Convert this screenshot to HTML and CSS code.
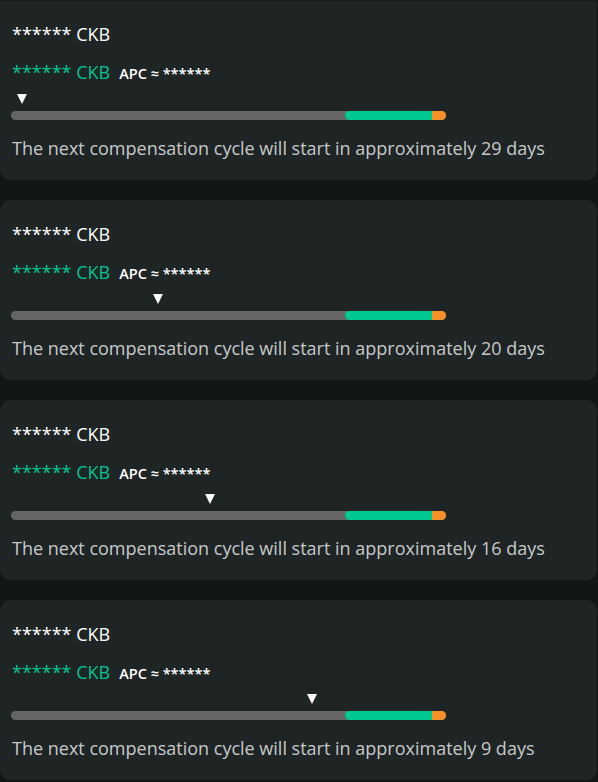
FILE: index.html
```html
<!DOCTYPE html>
<html>
<head>
<meta charset="utf-8">
<link rel="stylesheet" href="styles.css">
</head>
<body>
<div class="list">
  <div class="card">
    <div class="title">****** CKB</div>
    <div class="sub"><span class="amount">****** CKB</span><span class="apc">APC ≈ ******</span></div>
    <div class="track">
      <span class="marker" style="left: 2.5%"></span>
      <div class="bar"><span class="seg-green"></span><span class="seg-orange"></span></div>
    </div>
    <div class="note">The next compensation cycle will start in approximately 29 days</div>
  </div>
  <div class="card">
    <div class="title">****** CKB</div>
    <div class="sub"><span class="amount">****** CKB</span><span class="apc">APC ≈ ******</span></div>
    <div class="track">
      <span class="marker" style="left: 33.7%"></span>
      <div class="bar"><span class="seg-green"></span><span class="seg-orange"></span></div>
    </div>
    <div class="note">The next compensation cycle will start in approximately 20 days</div>
  </div>
  <div class="card">
    <div class="title">****** CKB</div>
    <div class="sub"><span class="amount">****** CKB</span><span class="apc">APC ≈ ******</span></div>
    <div class="track">
      <span class="marker" style="left: 45.7%"></span>
      <div class="bar"><span class="seg-green"></span><span class="seg-orange"></span></div>
    </div>
    <div class="note">The next compensation cycle will start in approximately 16 days</div>
  </div>
  <div class="card">
    <div class="title">****** CKB</div>
    <div class="sub"><span class="amount">****** CKB</span><span class="apc">APC ≈ ******</span></div>
    <div class="track">
      <span class="marker" style="left: 69.2%"></span>
      <div class="bar"><span class="seg-green"></span><span class="seg-orange"></span></div>
    </div>
    <div class="note">The next compensation cycle will start in approximately 9 days</div>
  </div>
</div>
</body>
</html>
```
FILE: styles.css
```css
html, body {
  margin: 0;
  padding: 0;
  background: #121615;
  font-family: "Open Sans", "Noto Sans", sans-serif;
}
.list {
  display: flex;
  flex-direction: column;
  gap: 20px;
}
.card {
  box-sizing: border-box;
  height: 180px;
  margin-right: 1px;
  background: #1f2425;
  border-radius: 10px;
  padding: 21px 12px 0 12px;
}
.card:first-child {
  border-top-left-radius: 0;
  border-top-right-radius: 0;
  border-top: 1px solid #171b1b;
  padding-top: 20px;
}
.title {
  color: #ffffff;
  font-size: 18px;
  line-height: 26px;
  height: 26px;
}
.sub {
  margin-top: 12px;
  display: flex;
  align-items: baseline;
  gap: 9px;
  height: 26px;
  line-height: 26px;
}
.amount {
  color: #00c48c;
  font-size: 18px;
}
.apc {
  color: #ffffff;
  font-size: 14.5px;
  font-weight: 600;
}
.track {
  position: relative;
  width: 435px;
  margin-left: -1px;
  margin-top: 11px;
  padding-top: 15px;
}
.marker {
  position: absolute;
  top: -2px;
  width: 0;
  height: 0;
  border-left: 5.5px solid transparent;
  border-right: 5.5px solid transparent;
  border-top: 10px solid #ffffff;
  transform: translateX(-50%);
}
.bar {
  position: relative;
  height: 9px;
  border-radius: 5px;
  background: #666666;
  display: flex;
  justify-content: flex-end;
  overflow: hidden;
}
.seg-green {
  width: 87px;
  background: #00c891;
  border-radius: 5px 0 0 5px;
}
.seg-orange {
  width: 14px;
  background: #f7922a;
}
.note {
  margin-top: 15px;
  color: #c7c9c9;
  font-size: 18px;
  line-height: 26px;
}
```
